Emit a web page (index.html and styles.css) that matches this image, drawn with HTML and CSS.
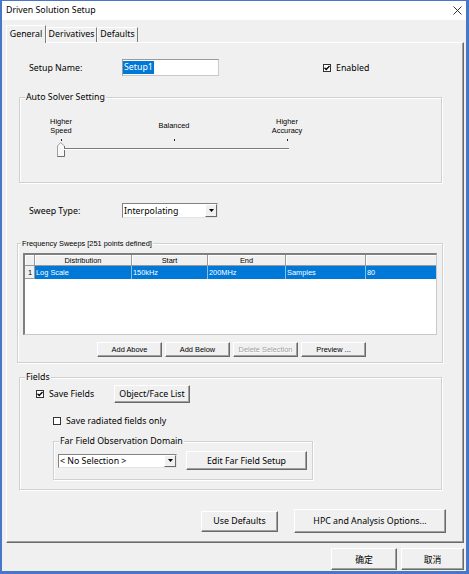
FILE: index.html
```html
<!DOCTYPE html>
<html>
<head>
<meta charset="utf-8">
<link rel="stylesheet" href="styles.css">
</head>
<body>
<div class="win">
  <div class="titlebar">
    <span class="title">Driven Solution Setup</span>
    <svg class="close" width="9" height="9" viewBox="0 0 9 9"><path d="M0.5 0.5 L8.5 8.5 M8.5 0.5 L0.5 8.5" stroke="#333" stroke-width="1" fill="none"/></svg>
  </div>
  <div class="client">
    <div class="tabs">
      <div class="tab active">General</div>
      <div class="tab t2">Derivatives</div>
      <div class="tab t3">Defaults</div>
    </div>
    <div class="panel">
      <div class="row row-setup">
        <span class="lbl">Setup Name:</span>
        <div class="textbox"><span class="sel">Setup1</span></div>
        <div class="check enabled"><span class="cb"><svg width="6" height="6" viewBox="0 0 6 6"><path d="M0.5 2.8 L2.2 4.5 L5.5 1" stroke="#000" stroke-width="1.3" fill="none"/></svg></span>Enabled</div>
      </div>

      <div class="group auto">
        <span class="gtitle">Auto Solver Setting</span>
        <div class="slabels small">
          <span class="sl">Higher<br>Speed</span>
          <span class="sl">Balanced</span>
          <span class="sl">Higher<br>Accuracy</span>
        </div>
        <div class="ticks"><span class="tk"></span><span class="tk"></span><span class="tk"></span></div>
        <div class="track">
          <svg class="thumb" width="8" height="15" viewBox="0 0 8 15"><path d="M0.5 14.5 L0.5 4 L3.5 0.5 L7.5 4 L7.5 14.5 Z" fill="#f7f7f7" stroke="#a0a0a0"/><path d="M7.5 4 L7.5 14.5 L0.5 14.5" stroke="#6d6d6d" fill="none"/></svg>
          <div class="line"></div>
        </div>
      </div>

      <div class="row row-sweep">
        <span class="lbl">Sweep Type:</span>
        <div class="combo w96"><span class="ctext">Interpolating</span><span class="cbtn"><svg width="5" height="3" viewBox="0 0 5 3"><path d="M0 0 H5 L2.5 3 Z" fill="#000"/></svg></span></div>
      </div>

      <div class="group freq">
        <span class="gtitle small">Frequency Sweeps [251 points defined]</span>
        <div class="grid small">
          <div class="grow head">
            <span class="c c0"></span>
            <span class="c c1">Distribution</span>
            <span class="c c2">Start</span>
            <span class="c c3">End</span>
            <span class="c c4"></span>
            <span class="c c5"></span>
          </div>
          <div class="grow data">
            <span class="c c0">1</span>
            <span class="c c1">Log Scale</span>
            <span class="c c2">150kHz</span>
            <span class="c c3">200MHz</span>
            <span class="c c4">Samples</span>
            <span class="c c5">80</span>
          </div>
        </div>
        <div class="gbtns small">
          <span class="btn b65">Add Above</span>
          <span class="btn b65">Add Below</span>
          <span class="btn b65 dis">Delete Selection</span>
          <span class="btn b65">Preview ...</span>
        </div>
      </div>

      <div class="group fields">
        <span class="gtitle">Fields</span>
        <div class="row frow1">
          <div class="check savef"><span class="cb"><svg width="6" height="6" viewBox="0 0 6 6"><path d="M0.5 2.8 L2.2 4.5 L5.5 1" stroke="#000" stroke-width="1.3" fill="none"/></svg></span>Save Fields</div>
          <span class="btn objbtn">Object/Face List</span>
        </div>
        <div class="row frow2">
          <div class="check"><span class="cb"></span>Save radiated fields only</div>
        </div>
        <div class="group far">
          <span class="gtitle">Far Field Observation Domain</span>
          <div class="row farrow">
            <div class="combo w119"><span class="ctext">&lt; No Selection &gt;</span><span class="cbtn"><svg width="5" height="3" viewBox="0 0 5 3"><path d="M0 0 H5 L2.5 3 Z" fill="#000"/></svg></span></div>
            <span class="btn editbtn">Edit Far Field Setup</span>
          </div>
        </div>
      </div>

      <div class="row row-bottom">
        <span class="btn usedef">Use Defaults</span>
        <span class="btn hpc">HPC and Analysis Options...</span>
      </div>
    </div>
    <div class="dlgbtns">
      <span class="btn ok">确定</span>
      <span class="btn cancel">取消</span>
    </div>
  </div>
</div>
</body>
</html>
```
FILE: styles.css
```css
* { box-sizing: border-box; margin: 0; padding: 0; }
body {
  width: 469px; height: 574px; overflow: hidden; background: #fff;
  font-family: "Noto Sans", "Open Sans", "Noto Sans CJK SC", sans-serif;
  font-size: 8.8px; color: #000;
}
.small { font-family: "Liberation Sans", Arial, sans-serif; font-size: 7.4px; }
.win {
  width: 469px; height: 574px;
  border-style: solid; border-color: #4677c9;
  border-width: 1px 3px 3px 2px;
  background: #f0f0f0;
  display: flex; flex-direction: column;
}
.titlebar {
  height: 19px; flex: none; background: #fff;
  display: flex; align-items: center; justify-content: space-between;
  padding: 0 4px 0 4px;
}
.title { line-height: 19px; }
.close { display: block; }
.client { flex: 1; padding: 5px 0 0 4px; display: flex; flex-direction: column; }

.tabs { display: flex; align-items: flex-end; height: 17px; position: relative; z-index: 2; flex: none; }
.tab {
  height: 15px; line-height: 13px; text-align: center;
  border-top: 1px solid #fff; border-left: 1px solid #fff;
  border-right: 1px solid #7a7a7a;
  background: #f0f0f0;
}
.tab.active { width: 40px; height: 18px; line-height: 17px; margin-bottom: -1px; }
.tab.t2 { width: 51px; }
.tab.t3 { width: 41px; }

.panel {
  width: 458px; height: 501px; flex: none;
  border-top: 1px solid #fff; border-left: 1px solid #fff;
  border-right: 1px solid #696969; border-bottom: 1px solid #696969;
  box-shadow: inset -1px -1px 0 #a0a0a0;
  display: flex; flex-direction: column; align-items: flex-start;
}
.row { display: flex; align-items: center; flex: none; }
.lbl { width: 93px; }
.row-setup { margin: 16px 0 0 22px; height: 17px; }
.textbox {
  width: 97px; height: 17px; background: #fff;
  border: 1px solid #c9c9c9; border-top-color: #9a9a9a; border-left-color: #9a9a9a;
  display: flex; align-items: center; padding-left: 0;
}
.sel { background: #0078d7; color: #fff; line-height: 13px; padding: 0 1px; }
.check { display: flex; align-items: center; }
.cb {
  width: 8px; height: 8px; background: #fff; border: 1px solid #333;
  margin-right: 5px; display: flex; align-items: center; justify-content: center;
}
.cb svg { display: block; }
.enabled { margin-left: 104px; }

.group {
  position: relative; flex: none;
  border: 1px solid #d0d0d0;
  box-shadow: inset 1px 1px 0 #fff, 1px 1px 0 #fff;
  display: flex; flex-direction: column; align-items: flex-start;
}
.gtitle {
  position: absolute; left: 5px; top: -7px; line-height: 12px;
  background: #f0f0f0; padding: 0 1px;
}
.gtitle.small { top: -5px; line-height: 9px; left: 3px; }
.auto { margin: 21px 0 0 12px; width: 423px; height: 86px; }
.slabels { margin-top: 18px; height: 19px; display: flex; align-items: center; padding-left: 11px; gap: 53px; }
.sl { width: 60px; text-align: center; line-height: 9px; }
.ticks { margin-top: 4px; height: 2px; display: flex; padding-left: 11px; gap: 53px; }
.tk { width: 60px; height: 2px; display: flex; justify-content: center; }
.tk::after { content: ""; width: 1px; height: 2px; background: #222; }
.track { margin-top: 1px; height: 15px; display: flex; align-items: flex-start; padding-left: 37px; }
.thumb { display: block; }
.line { width: 225px; height: 2px; margin-top: 6px; margin-left: -1px; border-top: 1px solid #7a7a7a; border-bottom: 1px solid #fff; }

.row-sweep { margin: 20px 0 0 22px; height: 15px; }
.combo {
  height: 15px; background: #fff; display: flex; align-items: stretch;
  border: 1px solid; border-color: #828282 #e3e3e3 #e3e3e3 #828282;
}
.w96 { width: 96px; }
.w119 { width: 119px; height: 14px; }
.ctext { flex: 1; display: flex; align-items: center; padding-left: 1px; white-space: nowrap; }
.cbtn {
  width: 12px; background: #f0f0f0; display: flex; align-items: center; justify-content: center;
  border-left: 1px solid #fff; border-top: 1px solid #fff;
  border-right: 1px solid #696969; border-bottom: 1px solid #696969;
}
.cbtn svg { display: block; }

.freq { margin: 25px 0 0 10px; width: 426px; height: 120px; }
.grid {
  margin: 9px 0 0 5px; width: 414px; height: 82px; background: #fff;
  border-style: solid; border-width: 2px 1px 1px 2px;
  border-color: #7f7f7f #c8c8c8 #c8c8c8 #7f7f7f;
  display: flex; flex-direction: column;
}
.grow { display: flex; flex: none; }
.grow.head { height: 11px; }
.grow.data { height: 13px; }
.c { display: flex; align-items: center; white-space: nowrap; overflow: hidden; border-right: 1px solid #9a9a9a; }
.head .c { background: #f0f0f0; justify-content: center; border-bottom: 1px solid #9a9a9a; box-shadow: inset 1px 1px 0 #fff; }
.data .c { background: #0078d7; color: #fff; padding-left: 1px; border-right-color: #8cbde8; }
.data .c0 { background: #f0f0f0; color: #000; justify-content: center; border-right-color: #9a9a9a; border-bottom: 1px solid #9a9a9a; }
.c0 { width: 10px; }
.c1 { width: 97px; }
.c2 { width: 76px; }
.c3 { width: 78px; }
.c4 { width: 80px; }
.c5 { width: 70px; border-right: none; }
.data .c5 { border-right: none; }

.btn {
  display: flex; align-items: center; justify-content: center; flex: none;
  background: #f0f0f0; white-space: nowrap;
  border-top: 1px solid #fff; border-left: 1px solid #fff;
  border-right: 1px solid #696969; border-bottom: 1px solid #696969;
  box-shadow: inset -1px -1px 0 #a0a0a0;
}
.gbtns { margin: 7px 0 0 79px; display: flex; gap: 3px; }
.b65 { width: 65px; height: 15px; }
.dis { color: #a0a0a0; text-shadow: 1px 1px 0 #fff; }

.fields { margin: 14px 0 0 12px; width: 423px; height: 113px; }
.frow1 { margin: 7px 0 0 16px; height: 18px; }
.savef { width: 78px; }
.objbtn { width: 76px; height: 18px; }
.frow2 { margin: 12px 0 0 33px; height: 12px; }
.far { margin: 14px 0 0 33px; width: 260px; height: 39px; }
.farrow { margin: 9px 0 0 4px; height: 19px; }
.editbtn { width: 121px; height: 19px; margin-left: 9px; }

.row-bottom { margin: 19px 0 0 194px; height: 24px; }
.usedef { width: 77px; height: 21px; }
.hpc { width: 152px; height: 24px; margin-left: 16px; }

.dlgbtns { margin-top: 5px; display: flex; justify-content: flex-end; gap: 4px; padding-right: 2px; flex: none; }
.ok { width: 66px; height: 22px; font-family: "Noto Sans CJK SC", sans-serif; }
.cancel { width: 63px; height: 22px; font-family: "Noto Sans CJK SC", sans-serif; }
```
